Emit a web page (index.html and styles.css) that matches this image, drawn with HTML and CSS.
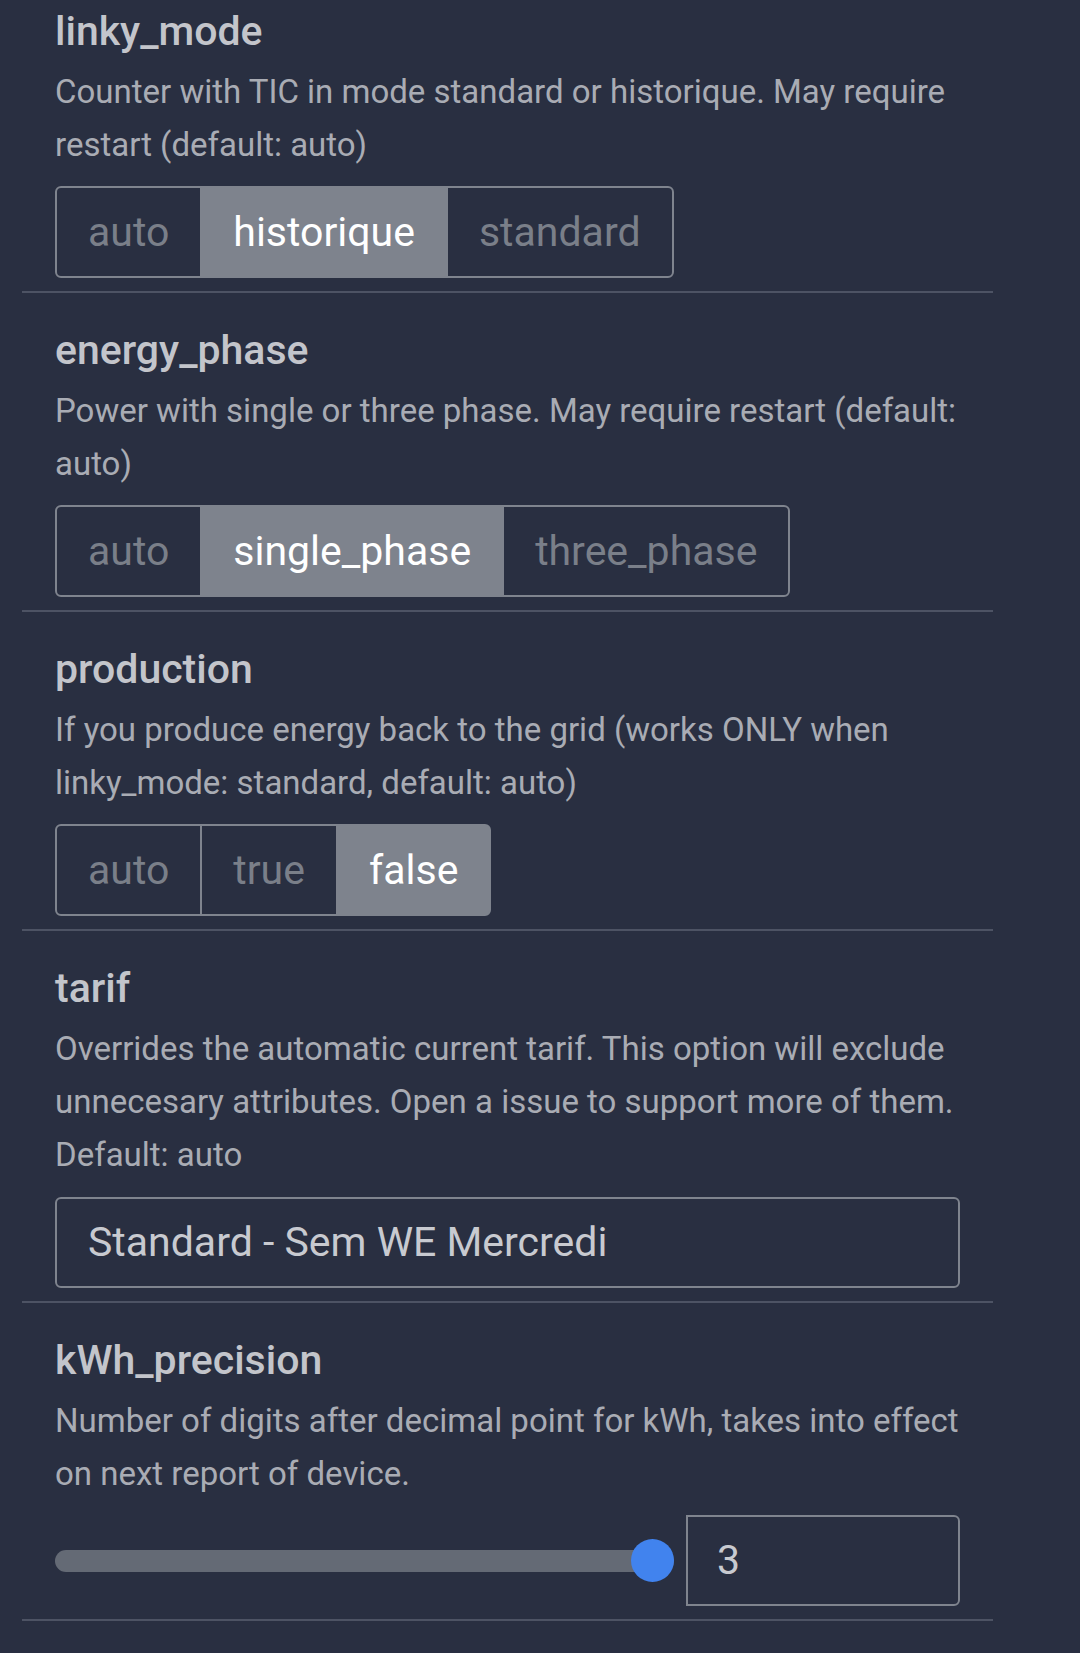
FILE: index.html
```html
<!DOCTYPE html>
<html lang="en">
<head>
<meta charset="utf-8">
<title>Linky settings</title>
<link rel="stylesheet" href="styles.css">
</head>
<body>
<div class="list">
  <section class="item">
    <h3 class="item-title">linky_mode</h3>
    <p class="item-desc">Counter with TIC in mode standard or historique. May require restart (default: auto)</p>
    <div class="toggle-group">
      <button class="toggle">auto</button>
      <button class="toggle selected">historique</button>
      <button class="toggle">standard</button>
    </div>
  </section>
  <section class="item">
    <h3 class="item-title">energy_phase</h3>
    <p class="item-desc">Power with single or three phase. May require restart (default: auto)</p>
    <div class="toggle-group">
      <button class="toggle">auto</button>
      <button class="toggle selected">single_phase</button>
      <button class="toggle">three_phase</button>
    </div>
  </section>
  <section class="item">
    <h3 class="item-title">production</h3>
    <p class="item-desc">If you produce energy back to the grid (works ONLY when linky_mode: standard, default: auto)</p>
    <div class="toggle-group">
      <button class="toggle">auto</button>
      <button class="toggle">true</button>
      <button class="toggle selected">false</button>
    </div>
  </section>
  <section class="item">
    <h3 class="item-title">tarif</h3>
    <p class="item-desc item-desc-loose">Overrides the automatic current tarif. This option will exclude unnecesary attributes. Open a issue to support more of them. Default: auto</p>
    <div class="select">Standard - Sem WE Mercredi</div>
  </section>
  <section class="item">
    <h3 class="item-title">kWh_precision</h3>
    <p class="item-desc">Number of digits after decimal point for kWh, takes into effect on next report of device.</p>
    <div class="range-row">
      <input class="range" type="range" min="0" max="3" value="3">
      <div class="number-box">3</div>
    </div>
  </section>
</div>
</body>
</html>
```

FILE: styles.css
```css
html, body {
  margin: 0;
  padding: 0;
  background: #292f41;
}

body {
  font-family: Roboto, "Noto Sans", "Liberation Sans", sans-serif;
  width: 1080px;
  height: 1653px;
  overflow: hidden;
}

.list {
  width: 971px;
  margin-left: 22px;
}

.item {
  padding: 33px 33px 13px 33px;
  border-bottom: 2px solid #4d5364;
}

.item:first-child {
  padding-top: 7px;
}

.item-title {
  margin: 0 0 10px 0;
  font-size: 41px;
  line-height: 48px;
  font-weight: 500;
  color: #c3c5cb;
}

.item-desc {
  margin: 0 0 15px 0;
  font-size: 33px;
  line-height: 53px;
  color: #a9acb4;
}

.item-desc-loose {
  margin-bottom: 16px;
}

.toggle-group {
  display: inline-flex;
}

.toggle {
  box-sizing: border-box;
  height: 92px;
  font-family: inherit;
  font-size: 41px;
  line-height: 88px;
  padding: 0 31px;
  margin: 0;
  margin-left: -2px;
  background: transparent;
  color: #7a7f89;
  border: 2px solid #7f848e;
  border-radius: 0;
}

.toggle:first-child {
  margin-left: 0;
  border-radius: 6px 0 0 6px;
}

.toggle:last-child {
  border-radius: 0 6px 6px 0;
}

.toggle.selected {
  background: #7e838d;
  border-color: #7e838d;
  color: #ffffff;
  position: relative;
}

.select {
  height: 87px;
  box-sizing: content-box;
  border: 2px solid #7f848e;
  border-radius: 6px;
  padding: 0 31px;
  font-size: 41px;
  line-height: 87px;
  color: #c8cad0;
}

.range-row {
  display: flex;
  align-items: center;
  gap: 12px;
}

.range {
  -webkit-appearance: none;
  appearance: none;
  flex: 0 0 619px;
  width: 619px;
  height: 44px;
  margin: 0;
  background: transparent;
}

.range::-webkit-slider-runnable-track {
  height: 22px;
  border-radius: 11px;
  background: #646a75;
}

.range::-webkit-slider-thumb {
  -webkit-appearance: none;
  appearance: none;
  width: 43px;
  height: 43px;
  margin-top: -10.5px;
  border-radius: 50%;
  background: #4183ee;
  border: none;
}

.number-box {
  flex: 1;
  height: 87px;
  border: 2px solid #7f848e;
  border-radius: 0 6px 6px 0;
  padding: 0 29px;
  font-size: 41px;
  line-height: 87px;
  color: #c8cad0;
}
```
